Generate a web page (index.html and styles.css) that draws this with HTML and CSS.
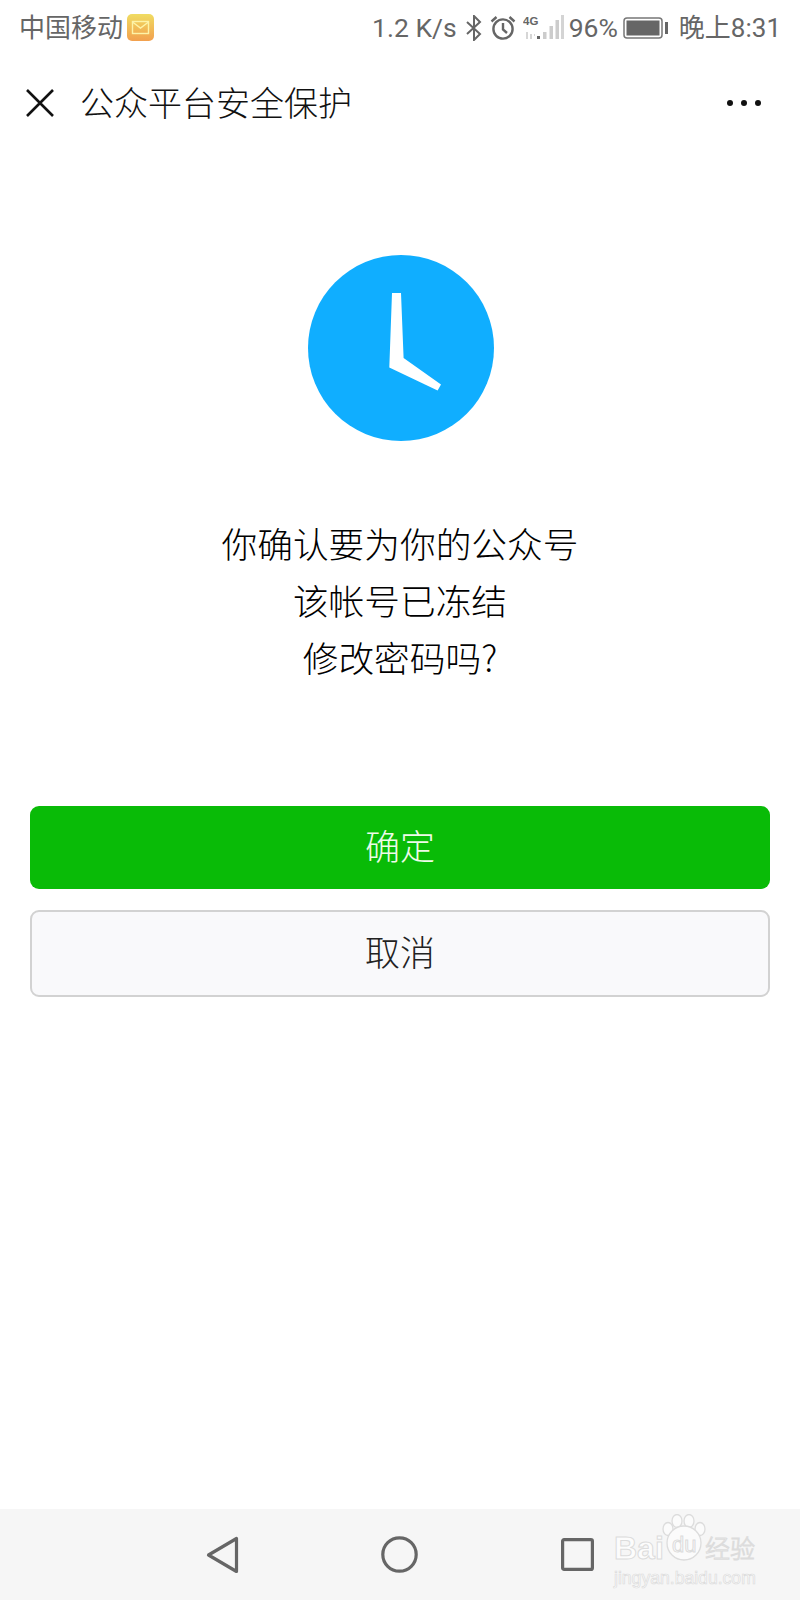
FILE: index.html
```html
<!DOCTYPE html>
<html lang="zh-CN">
<head>
<meta charset="utf-8">
<title>公众平台安全保护</title>
<link rel="stylesheet" href="styles.css">
</head>
<body>
<div class="page">
  <div class="status">
    <span class="carrier">中国移动</span>
    <svg class="mail" width="27" height="27" viewBox="0 0 27 27">
      <defs><linearGradient id="mg" x1="0" y1="0" x2="0" y2="1"><stop offset="0" stop-color="#f0dc62"/><stop offset="1" stop-color="#f2a04e"/></linearGradient></defs>
      <rect width="27" height="27" rx="5" fill="url(#mg)"/>
      <rect x="5.500" y="7.500" width="16" height="12" fill="none" stroke="#fdf3a8" stroke-width="1.400"/>
      <path d="M5.500 8l8 6 8-6" fill="none" stroke="#fdf3a8" stroke-width="1.400"/>
    </svg>
    <span class="speed">1.2 K/s</span>
    <svg class="bt" width="18" height="26" viewBox="0 0 18 26"><path d="M2 7l13 12-6 6V1l6 6L2 19" fill="none" stroke="#666" stroke-width="2"/></svg>
    <svg class="alarm" width="26" height="26" viewBox="0 0 26 26" fill="none" stroke="#666" stroke-width="2.400"><circle cx="13" cy="14" r="9.600"/><path d="M13 8v6.500l4 3.500M1.500 6.500L6.500 2M24.500 6.500L19.500 2"/></svg>
    <svg class="signal" width="41" height="26" viewBox="0 0 41 26">
      <text x="0" y="10" class="sig-4g">4G</text>
      <path d="M4 17v7M8 19v5M11 20h1" stroke="#ccc" stroke-width="1.600" fill="none"/>
      <rect x="14" y="21" width="3" height="3" fill="#666"/>
      <rect x="20" y="17" width="3.500" height="7" fill="#ccc"/>
      <rect x="26.500" y="11" width="3.500" height="13" fill="#ccc"/>
      <rect x="32.500" y="5" width="3.500" height="19" fill="#ccc"/>
      <rect x="38" y="0" width="3" height="24" fill="#d4d4d4"/>
    </svg>
    <span class="pct">96%</span>
    <svg class="batt" width="46" height="22" viewBox="0 0 46 22"><rect x="1" y="1" width="38" height="20" rx="3" fill="none" stroke="#777" stroke-width="1.500"/><rect x="3.500" y="3.500" width="33" height="15" fill="#666"/><rect x="42" y="5" width="3" height="12" fill="#666"/></svg>
    <span class="clock-text">晚上8:31</span>
  </div>

  <header class="title-bar">
    <svg class="close" width="28" height="28" viewBox="0 0 28 28"><path d="M1 1l26 26M27 1L1 27" stroke="#111" stroke-width="2.600" fill="none"/></svg>
    <span class="title">公众平台安全保护</span>
    <span class="more"><i></i><i></i><i></i></span>
  </header>

  <main class="main">
    <svg class="clock" width="186" height="186" viewBox="0 0 186 186">
      <circle cx="93" cy="93" r="93" fill="#10aeff"/>
      <path d="M84 38h9l2.600 65 37.400 26.600-3.400 6L81.300 112.500z" fill="#fff"/>
    </svg>
    <div class="message">
      <div>你确认要为你的公众号</div>
      <div>该帐号已冻结</div>
      <div>修改密码吗?</div>
    </div>
    <div class="actions">
      <div class="btn btn-primary">确定</div>
      <div class="btn btn-default">取消</div>
    </div>
  </main>

  <nav class="nav">
    <svg class="nav-back" width="33" height="38" viewBox="0 0 33 38"><path d="M30.500 2.500v33L2.500 19z" fill="none" stroke="#666" stroke-width="3.200" stroke-linejoin="round"/></svg>
    <svg class="nav-home" width="37" height="37" viewBox="0 0 37 37"><circle cx="18.500" cy="18.500" r="16.700" fill="none" stroke="#666" stroke-width="3.200"/></svg>
    <svg class="nav-recent" width="33" height="33" viewBox="0 0 33 33"><rect x="1.600" y="1.600" width="29.800" height="29.800" rx="1.500" fill="none" stroke="#666" stroke-width="3.200"/></svg>
    <div class="mark">
      <div class="mark-top">
        <span class="mark-bai">Bai</span>
        <svg class="paw" width="44" height="47" viewBox="0 0 44 47" fill="#fbfbfb" stroke="#dcdcdc" stroke-width="1.300">
          <ellipse cx="15" cy="7" rx="5" ry="6.500"/><ellipse cx="27" cy="7" rx="5" ry="6.500"/><ellipse cx="6" cy="15" rx="5" ry="6.500"/><ellipse cx="38" cy="15" rx="5" ry="6.500"/>
          <circle cx="22" cy="29" r="17"/>
        </svg>
        <span class="mark-du">du</span>
        <span class="mark-cn">经验</span>
      </div>
      <div class="mark-url">jingyan.baidu.com</div>
    </div>
  </nav>
</div>
</body>
</html>
```

FILE: styles.css
```css
* { box-sizing: border-box; }
html, body { margin: 0; padding: 0; }
body {
  background: #fff;
  font-family: "Noto Sans CJK SC", "Noto Sans", sans-serif;
  font-weight: 300;
}
.page {
  width: 800px;
  height: 1600px;
  display: flex;
  flex-direction: column;
  overflow: hidden;
}

/* status bar */
.status {
  height: 56px;
  display: flex;
  align-items: center;
  padding: 0 19px;
  color: #666;
  font-size: 26px;
  font-weight: 400;
}
.status span { line-height: 56px; white-space: nowrap; }
.carrier { width: 104px; padding-bottom: 4px; line-height: 52px; }
.mail { margin: 0 0 2px 4px; }
.speed {
  margin-left: auto;
  font-family: Roboto, sans-serif;
  font-size: 26.500px;
}
.bt { margin-left: 8px; }
.alarm { margin-left: 7px; }
.signal { margin-left: 7px; }
.sig-4g { font-family: "Liberation Sans", sans-serif; font-size: 11.500px; font-weight: 700; fill: #666; }
.pct { margin-left: 5px; font-family: Roboto, sans-serif; font-size: 26.500px; }
.batt { margin-left: 5px; }
.clock-text { margin-left: 10px; font-family: Roboto, "Noto Sans CJK SC", sans-serif; }

/* title bar */
.title-bar {
  height: 94px;
  display: flex;
  align-items: center;
  padding: 0 39px 0 26px;
}
.close { margin-top: -1px; }
.title {
  margin: -4px 0 0 26px;
  font-size: 34px;
  color: #111;
  white-space: nowrap;
}
.more { margin-left: auto; display: flex; gap: 8px; }
.more i {
  display: block;
  width: 6px;
  height: 6px;
  border-radius: 50%;
  background: #111;
}

/* main */
.main {
  flex: 1;
  padding: 105px 30px 0;
  display: flex;
  flex-direction: column;
  align-items: center;
}
.clock { display: block; margin-left: 1px; }
.message {
  margin-top: 73px;
  font-size: 35.700px;
  line-height: 57px;
  color: #000;
  text-align: center;
}
.actions {
  margin-top: 121px;
  width: 100%;
  display: flex;
  flex-direction: column;
  gap: 21px;
}
.btn {
  display: flex;
  align-items: center;
  justify-content: center;
  border-radius: 9px;
  font-size: 35px;
  padding-bottom: 6px;
}
.btn-primary { height: 83px; background: #09bb07; color: #eefbe9; }
.btn-default {
  height: 87px;
  background: #f9f9fb;
  color: #222;
  border: 2px solid #d2d2d2;
}

/* nav bar */
.nav {
  position: relative;
  height: 91px;
  background: #f6f6f6;
  display: flex;
  align-items: center;
}
.nav-back { margin-left: 206px; }
.nav-home { margin-left: 142px; }
.nav-recent { margin-left: 143px; }
.mark {
  position: absolute;
  left: 614px;
  top: 0;
  width: 145px;
  color: #fcfcfc;
}
.mark-top {
  position: relative;
  height: 58px;
}
.mark-bai {
  position: absolute;
  left: 0;
  top: 21px;
  font-family: "Liberation Sans", sans-serif;
  font-weight: 700;
  font-size: 32px;
  line-height: 36px;
  -webkit-text-stroke: 1px #dcdcdc;
}
.paw { position: absolute; left: 48px; top: 5px; }
.mark-du {
  position: absolute;
  left: 58px;
  top: 24px;
  font-family: "Liberation Sans", sans-serif;
  font-size: 22px;
  line-height: 24px;
  -webkit-text-stroke: 1px #dcdcdc;
}
.mark-cn {
  position: absolute;
  left: 91px;
  top: 20px;
  font-size: 25px;
  line-height: 36px;
  white-space: nowrap;
  -webkit-text-stroke: 1px #dcdcdc;
}
.mark-url {
  font-family: "Liberation Sans", sans-serif;
  font-size: 17.600px;
  line-height: 22px;
  white-space: nowrap;
  -webkit-text-stroke: 0.700px #dcdcdc;
}
```
